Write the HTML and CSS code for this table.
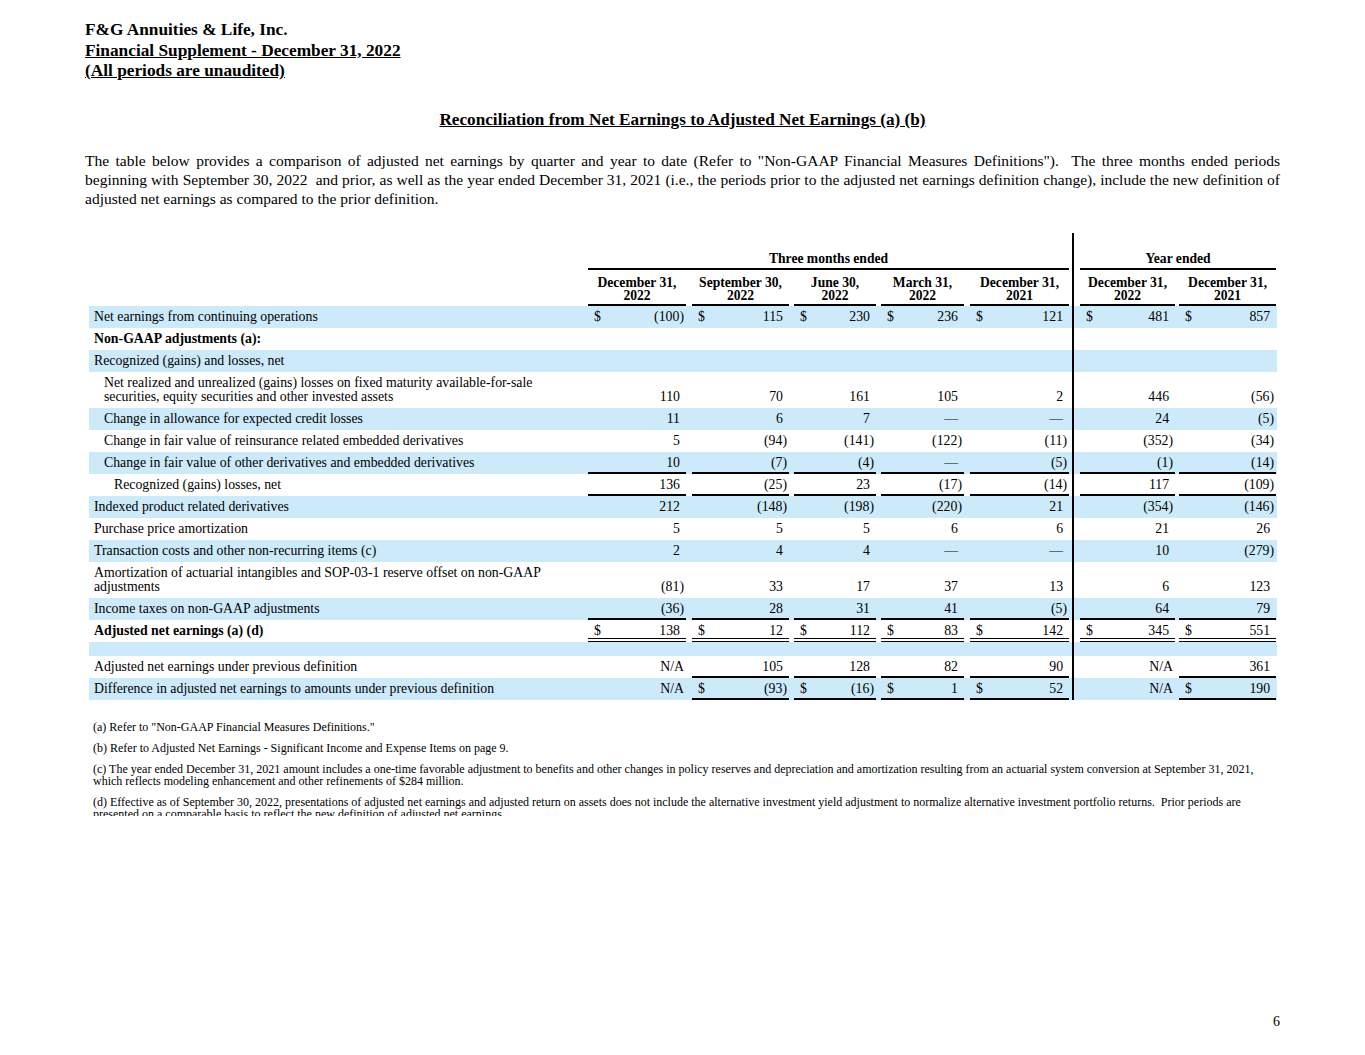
FILE: index.html
```html
<!DOCTYPE html>
<html>
<head>
<meta charset="utf-8">
<title>Reconciliation from Net Earnings to Adjusted Net Earnings</title>
<link rel="stylesheet" href="styles.css">
</head>
<body>
<div class="page">
  <div class="doc-head">
    <div>F&amp;G Annuities &amp; Life, Inc.</div>
    <div class="ul">Financial Supplement - December 31, 2022</div>
    <div class="ul">(All periods are unaudited)</div>
  </div>
  <h1 class="title">Reconciliation from Net Earnings to Adjusted Net Earnings (a) (b)</h1>
  <p class="intro"><span class="jl">The table below provides a comparison of adjusted net earnings by quarter and year to date (Refer to "Non-GAAP Financial Measures Definitions").&nbsp; The three months ended periods</span><span class="jl">beginning with September 30, 2022&nbsp; and prior, as well as the year ended December 31, 2021 (i.e., the periods prior to the adjusted net earnings definition change), include the new definition of</span>adjusted net earnings as compared to the prior definition.</p>

  <table class="t">
    <colgroup>
      <col class="w-l"><col class="w1"><col class="w2"><col class="w3"><col class="w4"><col class="w5"><col class="w6"><col class="w7">
    </colgroup>
    <tr class="h1">
      <td></td>
      <td class="h3m" colspan="5"><div class="grp">Three months ended</div></td>
      <td class="hyr" colspan="2"><div class="grp">Year ended</div></td>
    </tr>
    <tr class="h2">
      <td></td>
      <td><div class="hd">December 31,<br>2022</div></td>
      <td><div class="hd">September 30,<br>2022</div></td>
      <td><div class="hd">June 30,<br>2022</div></td>
      <td><div class="hd">March 31,<br>2022</div></td>
      <td><div class="hd">December 31,<br>2021</div></td>
      <td><div class="hd">December 31,<br>2022</div></td>
      <td><div class="hd">December 31,<br>2021</div></td>
    </tr>
    <tr class="b">
      <td class="l">Net earnings from continuing operations</td>
      <td><div class="v n"><span class="s">$</span>(100)</div></td>
      <td><div class="v"><span class="s">$</span>115</div></td>
      <td><div class="v"><span class="s">$</span>230</div></td>
      <td><div class="v"><span class="s">$</span>236</div></td>
      <td><div class="v"><span class="s">$</span>121</div></td>
      <td><div class="v"><span class="s">$</span>481</div></td>
      <td><div class="v"><span class="s">$</span>857</div></td>
    </tr>
    <tr>
      <td class="l bold">Non-GAAP adjustments (a):</td>
      <td></td><td></td><td></td><td></td><td></td><td></td><td></td>
    </tr>
    <tr class="b">
      <td class="l">Recognized (gains) and losses, net</td>
      <td></td><td></td><td></td><td></td><td></td><td></td><td></td>
    </tr>
    <tr class="tall">
      <td class="l l1">Net realized and unrealized (gains) losses on fixed maturity available-for-sale<br>securities, equity securities and other invested assets</td>
      <td><div class="v">110</div></td>
      <td><div class="v">70</div></td>
      <td><div class="v">161</div></td>
      <td><div class="v">105</div></td>
      <td><div class="v">2</div></td>
      <td><div class="v">446</div></td>
      <td><div class="v n">(56)</div></td>
    </tr>
    <tr class="b">
      <td class="l l1">Change in allowance for expected credit losses</td>
      <td><div class="v">11</div></td>
      <td><div class="v">6</div></td>
      <td><div class="v">7</div></td>
      <td><div class="v">—</div></td>
      <td><div class="v">—</div></td>
      <td><div class="v">24</div></td>
      <td><div class="v n">(5)</div></td>
    </tr>
    <tr>
      <td class="l l1">Change in fair value of reinsurance related embedded derivatives</td>
      <td><div class="v">5</div></td>
      <td><div class="v n">(94)</div></td>
      <td><div class="v n">(141)</div></td>
      <td><div class="v n">(122)</div></td>
      <td><div class="v n">(11)</div></td>
      <td><div class="v n">(352)</div></td>
      <td><div class="v n">(34)</div></td>
    </tr>
    <tr class="b">
      <td class="l l1">Change in fair value of other derivatives and embedded derivatives</td>
      <td><div class="v u">10</div></td>
      <td><div class="v u n">(7)</div></td>
      <td><div class="v u n">(4)</div></td>
      <td><div class="v u">—</div></td>
      <td><div class="v u n">(5)</div></td>
      <td><div class="v u n">(1)</div></td>
      <td><div class="v u n">(14)</div></td>
    </tr>
    <tr>
      <td class="l l2">Recognized (gains) losses, net</td>
      <td><div class="v u">136</div></td>
      <td><div class="v u n">(25)</div></td>
      <td><div class="v u">23</div></td>
      <td><div class="v u n">(17)</div></td>
      <td><div class="v u n">(14)</div></td>
      <td><div class="v u">117</div></td>
      <td><div class="v u n">(109)</div></td>
    </tr>
    <tr class="b">
      <td class="l">Indexed product related derivatives</td>
      <td><div class="v">212</div></td>
      <td><div class="v n">(148)</div></td>
      <td><div class="v n">(198)</div></td>
      <td><div class="v n">(220)</div></td>
      <td><div class="v">21</div></td>
      <td><div class="v n">(354)</div></td>
      <td><div class="v n">(146)</div></td>
    </tr>
    <tr>
      <td class="l">Purchase price amortization</td>
      <td><div class="v">5</div></td>
      <td><div class="v">5</div></td>
      <td><div class="v">5</div></td>
      <td><div class="v">6</div></td>
      <td><div class="v">6</div></td>
      <td><div class="v">21</div></td>
      <td><div class="v">26</div></td>
    </tr>
    <tr class="b">
      <td class="l">Transaction costs and other non-recurring items (c)</td>
      <td><div class="v">2</div></td>
      <td><div class="v">4</div></td>
      <td><div class="v">4</div></td>
      <td><div class="v">—</div></td>
      <td><div class="v">—</div></td>
      <td><div class="v">10</div></td>
      <td><div class="v n">(279)</div></td>
    </tr>
    <tr class="tall">
      <td class="l">Amortization of actuarial intangibles and SOP-03-1 reserve offset on non-GAAP<br>adjustments</td>
      <td><div class="v n">(81)</div></td>
      <td><div class="v">33</div></td>
      <td><div class="v">17</div></td>
      <td><div class="v">37</div></td>
      <td><div class="v">13</div></td>
      <td><div class="v">6</div></td>
      <td><div class="v">123</div></td>
    </tr>
    <tr class="b">
      <td class="l">Income taxes on non-GAAP adjustments</td>
      <td><div class="v u n">(36)</div></td>
      <td><div class="v u">28</div></td>
      <td><div class="v u">31</div></td>
      <td><div class="v u">41</div></td>
      <td><div class="v u n">(5)</div></td>
      <td><div class="v u">64</div></td>
      <td><div class="v u">79</div></td>
    </tr>
    <tr>
      <td class="l bold">Adjusted net earnings (a) (d)</td>
      <td><div class="v d"><span class="s">$</span>138</div></td>
      <td><div class="v d"><span class="s">$</span>12</div></td>
      <td><div class="v d"><span class="s">$</span>112</div></td>
      <td><div class="v d"><span class="s">$</span>83</div></td>
      <td><div class="v d"><span class="s">$</span>142</div></td>
      <td><div class="v d"><span class="s">$</span>345</div></td>
      <td><div class="v d"><span class="s">$</span>551</div></td>
    </tr>
    <tr class="b gap">
      <td></td><td></td><td></td><td></td><td></td><td></td><td></td><td></td>
    </tr>
    <tr>
      <td class="l">Adjusted net earnings under previous definition</td>
      <td><div class="v n">N/A</div></td>
      <td><div class="v u">105</div></td>
      <td><div class="v u">128</div></td>
      <td><div class="v u">82</div></td>
      <td><div class="v u">90</div></td>
      <td><div class="v n">N/A</div></td>
      <td><div class="v u">361</div></td>
    </tr>
    <tr class="b">
      <td class="l">Difference in adjusted net earnings to amounts under previous definition</td>
      <td><div class="v n">N/A</div></td>
      <td><div class="v u n"><span class="s">$</span>(93)</div></td>
      <td><div class="v u n"><span class="s">$</span>(16)</div></td>
      <td><div class="v u"><span class="s">$</span>1</div></td>
      <td><div class="v u"><span class="s">$</span>52</div></td>
      <td><div class="v n">N/A</div></td>
      <td><div class="v u"><span class="s">$</span>190</div></td>
    </tr>
  </table>

  <div class="notes">
    <p>(a) Refer to "Non-GAAP Financial Measures Definitions."</p>
    <p>(b) Refer to Adjusted Net Earnings - Significant Income and Expense Items on page 9.</p>
    <p>(c) The year ended December 31, 2021 amount includes a one-time favorable adjustment to benefits and other changes in policy reserves and depreciation and amortization resulting from an actuarial system conversion at September 31, 2021,<br>which reflects modeling enhancement and other refinements of $284 million.</p>
    <p>(d) Effective as of September 30, 2022, presentations of adjusted net earnings and adjusted return on assets does not include the alternative investment yield adjustment to normalize alternative investment portfolio returns.&nbsp; Prior periods are<br>presented on a comparable basis to reflect the new definition of adjusted net earnings.</p>
  </div>

  <div class="pageno">6</div>
</div>
</body>
</html>
```

FILE: styles.css
```css
html, body {
  margin: 0;
  padding: 0;
  background: #fff;
}
body {
  font-family: "Liberation Serif", "Times New Roman", serif;
  color: #000;
}
.page {
  width: 1365px;
  height: 1055px;
  box-sizing: border-box;
  padding: 20px 85px 0 85px;
  display: flex;
  flex-direction: column;
}
.doc-head {
  font-weight: bold;
  font-size: 17.3px;
  line-height: 20.5px;
}
.ul {
  text-decoration: underline;
}
.title {
  margin: 28.5px 0 0 0;
  font-size: 17.2px;
  line-height: 20px;
  font-weight: bold;
  text-decoration: underline;
  text-align: center;
}
.intro {
  margin: 20.5px 0 0 0;
  font-size: 15.5px;
  line-height: 19px;
  text-align: justify;
}
.intro .jl {
  display: block;
  text-align: justify;
  text-align-last: justify;
  white-space: nowrap;
}
.t {
  margin: 25.5px 0 0 4px;
  border-collapse: separate;
  border-spacing: 0;
  table-layout: fixed;
  width: 1188px;
  font-size: 13.8px;
}
.w-l { width: 499px; }
.w1 { width: 101px; }
.w2 { width: 103px; }
.w3 { width: 86px; }
.w4 { width: 89px; }
.w5 { width: 105px; }
.w6 { width: 105px; }
.w7 { width: 100px; }

.t td {
  box-sizing: border-box;
  padding: 0;
  height: 22px;
  vertical-align: bottom;
  line-height: 14px;
}
.t tr > td:nth-child(2) { padding: 0 3px 0 0; }
.t tr > td:nth-child(3) { padding: 0 3px; }
.t tr > td:nth-child(4) { padding: 0 2px; }
.t tr > td:nth-child(5) { padding: 0 3px; }
.t tr > td:nth-child(6) { padding: 0 3px; }
.t tr > td:nth-child(7) { padding: 0 2px 0 6px; border-left: 2px solid #000; }
.t tr > td:nth-child(8) { padding: 0 1px 0 2px; }
.t tr > td.h3m { padding: 0 3px 0 0; border-left: 0; }
.t tr > td.hyr { padding: 0 1px 0 6px; border-left: 2px solid #000; }

.t tr.b td { background: #cdeafa; }
.t tr.tall td { height: 36px; }
.t tr.gap td { height: 14px; }
.t tr.h1 td { height: 37px; }
.t tr.h2 td { height: 36px; }

.grp {
  font-weight: bold;
  font-size: 13.6px;
  text-align: center;
  line-height: 14px;
  padding-bottom: 2px;
  border-bottom: 2px solid #000;
}
.hd {
  font-weight: bold;
  font-size: 13.6px;
  text-align: center;
  line-height: 13px;
  padding-bottom: 2px;
  border-bottom: 2px solid #000;
}
.l {
  padding: 0 0 4px 5px !important;
}
.l.l1 { padding-left: 15px !important; }
.l.l2 { padding-left: 25px !important; }
.bold { font-weight: bold; }

.v {
  display: flex;
  justify-content: flex-end;
  line-height: 14px;
  padding: 0 6px 2px 6px;
  border-bottom: 2px solid transparent;
  white-space: nowrap;
}
.v .s { margin-right: auto; }
.v.n { padding-right: 2px; }
.v.u { border-bottom-color: #000; }
.v.d { border-bottom: 4px double #000; padding-bottom: 0; }

.notes {
  margin: 21px 0 0 8px;
  height: 95px;
  overflow: hidden;
  font-size: 12px;
  line-height: 12px;
}
.notes p {
  margin: 0 0 9px 0;
  white-space: nowrap;
}
.pageno {
  margin-top: auto;
  text-align: right;
  font-size: 14px;
  line-height: 16px;
  padding-bottom: 25px;
}
```
